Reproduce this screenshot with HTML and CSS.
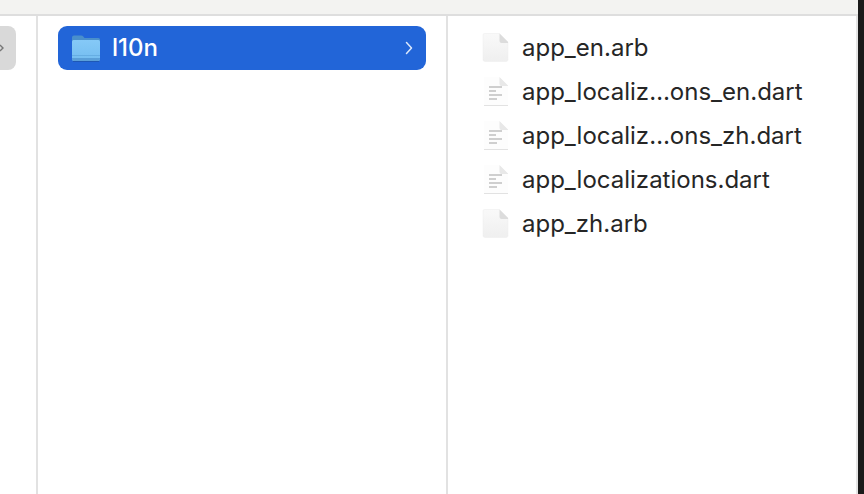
FILE: index.html
```html
<!DOCTYPE html>
<html lang="en">
<head>
<meta charset="utf-8">
<title>l10n</title>
<link rel="stylesheet" href="styles.css">
</head>
<body>
<div class="window">
  <div class="main">
    <div class="toolbar"></div>
    <div class="browser">
      <section class="col col-parent">
        <div class="parent-row">
          <svg class="parent-chev" width="4" height="8" viewBox="0 0 4 8"><path d="M0 1 L3 4 L0 7" fill="none" stroke="#777" stroke-width="1.4"/></svg>
        </div>
      </section>
      <section class="col col-folder">
        <div class="row-selected">
          <svg class="folder" width="30" height="29" viewBox="0 0 30 29">
            <defs>
              <linearGradient id="fg" x1="0" y1="0" x2="0" y2="1"><stop offset="0" stop-color="#85c9f7"/><stop offset="1" stop-color="#74bdf0"/></linearGradient>
              <linearGradient id="sg" x1="0" y1="0" x2="0" y2="1"><stop offset="0" stop-color="#f9f9f9"/><stop offset="1" stop-color="#efefef"/></linearGradient>
            </defs>
            <path d="M1 3.500 Q1 1.500 3 1.500 H10 Q11.500 1.500 12.500 2.800 L13.500 4 H27.500 Q29 4 29 5.500 V10 H1 Z" fill="#4a8fcb"/>
            <path d="M1 7.500 Q1 6 2.500 6 H27.500 Q29 6 29 7.500 V25 Q29 27 27 27 H3 Q1 27 1 25 Z" fill="url(#fg)"/>
            <rect x="1" y="21" width="28" height="1" fill="#66aee3"/>
            <path d="M1 24 V25 Q1 27 3 27 H27 Q29 27 29 25 V24 Z" fill="#5a9fd8"/>
            <path d="M2 27.500 H28" stroke="#1d4f9f" stroke-width="1" opacity="0.6"/>
          </svg>
          <span class="sel-name">l10n</span>
          <svg class="chev" width="8" height="14" viewBox="0 0 8 14"><path d="M1.500 1.500 L6.500 7 L1.500 12.500" fill="none" stroke="#dce8fb" stroke-width="1.500" stroke-linecap="round" stroke-linejoin="round"/></svg>
        </div>
      </section>
      <section class="col col-files">
        <ul class="files">
          <li class="file">
            <svg class="icon" width="28" height="30" viewBox="0 0 28 30"><path d="M1 2 Q1 0.500 2.500 0.500 H17.500 L26 9 V26.500 Q26 28.500 24 28.500 H3 Q1 28.500 1 26.500 Z" fill="url(#sg)" class="sheet"/><path d="M17.500 0.500 V8 Q17.500 10 19.500 10 H26 V9 Z" class="fold"/></svg>
            <span class="name">app_en.arb</span>
          </li>
          <li class="file">
            <svg class="icon" width="28" height="30" viewBox="0 0 28 30"><path d="M2 0 H17.500 L26 8.500 V28 H2 Z" class="page"/><path d="M2 28.500 H26" class="page-base"/><path d="M17.500 0 V7 Q17.500 9 19.500 9 H26 V8.500 Z" class="page-fold"/><g class="lines"><rect x="7" y="9" width="13" height="2"/><rect x="7" y="13" width="7" height="2"/><rect x="7" y="17" width="13" height="2"/><rect x="7" y="21" width="8" height="2"/></g></svg>
            <span class="name">app_localiz…ons_en.dart</span>
          </li>
          <li class="file">
            <svg class="icon" width="28" height="30" viewBox="0 0 28 30"><path d="M2 0 H17.500 L26 8.500 V28 H2 Z" class="page"/><path d="M2 28.500 H26" class="page-base"/><path d="M17.500 0 V7 Q17.500 9 19.500 9 H26 V8.500 Z" class="page-fold"/><g class="lines"><rect x="7" y="9" width="13" height="2"/><rect x="7" y="13" width="7" height="2"/><rect x="7" y="17" width="13" height="2"/><rect x="7" y="21" width="8" height="2"/></g></svg>
            <span class="name">app_localiz…ons_zh.dart</span>
          </li>
          <li class="file">
            <svg class="icon" width="28" height="30" viewBox="0 0 28 30"><path d="M2 0 H17.500 L26 8.500 V28 H2 Z" class="page"/><path d="M2 28.500 H26" class="page-base"/><path d="M17.500 0 V7 Q17.500 9 19.500 9 H26 V8.500 Z" class="page-fold"/><g class="lines"><rect x="7" y="9" width="13" height="2"/><rect x="7" y="13" width="7" height="2"/><rect x="7" y="17" width="13" height="2"/><rect x="7" y="21" width="8" height="2"/></g></svg>
            <span class="name">app_localizations.dart</span>
          </li>
          <li class="file">
            <svg class="icon" width="28" height="30" viewBox="0 0 28 30"><path d="M1 2 Q1 0.500 2.500 0.500 H17.500 L26 9 V26.500 Q26 28.500 24 28.500 H3 Q1 28.500 1 26.500 Z" fill="url(#sg)" class="sheet"/><path d="M17.500 0.500 V8 Q17.500 10 19.500 10 H26 V9 Z" class="fold"/></svg>
            <span class="name">app_zh.arb</span>
          </li>
        </ul>
      </section>
      <div class="edge"></div>
    </div>
  </div>
  <div class="strip"></div>
</div>
</body>
</html>
```

FILE: styles.css
```css
* { box-sizing: border-box; }
html, body { margin: 0; padding: 0; height: 100%; background: #fff; overflow: hidden; }
.window {
  width: 864px;
  height: 494px;
  display: flex;
  font-family: Inter, "Liberation Sans", sans-serif;
  color: #262626;
}
.main { flex: 1; display: flex; flex-direction: column; min-width: 0; }
.strip { width: 6px; flex: none; background: #1a1a1a; }
.toolbar {
  height: 16px;
  flex: none;
  background: #f3f3f1;
  border-bottom: 2px solid #dedede;
}
.browser { flex: 1; display: flex; min-height: 0; }
.col { padding-top: 10px; flex: none; }
.col-parent { width: 38px; border-right: 2px solid #e2e2e2; }
.parent-row {
  width: 16px;
  height: 44px;
  background: #d9d9d9;
  border-radius: 0 8px 8px 0;
  display: flex;
  align-items: center;
}
.parent-chev { display: block; }
.col-folder { width: 410px; border-right: 2px solid #e2e2e2; padding-left: 20px; }
.row-selected {
  width: 368px;
  height: 44px;
  background: #2265d8;
  border-radius: 9px;
  display: flex;
  align-items: center;
  padding: 0 13px;
  color: #fff;
  font-size: 24px;
  font-weight: 500;
}
.folder { margin-right: 11px; flex: none; }
.sel-name { flex: 1; margin-bottom: 2px; }
.col-files { flex: 1; }
.files { list-style: none; margin: 0; padding: 0 0 0 34px; }
.file {
  height: 44px;
  display: flex;
  align-items: center;
  gap: 12px;
  font-size: 24px;
  white-space: nowrap;
}
.name { margin-bottom: 2px; }
.icon { flex: none; }
.sheet { stroke: #ececec; stroke-width: 0.500; }
.fold { fill: #dcdcdc; }
.page { fill: #fdfdfd; }
.page-base { stroke: #e2e2e2; stroke-width: 1; fill: none; }
.page-fold { fill: #e8e8e8; }
.lines { fill: #cfcfcf; }
.edge { width: 2px; flex: none; background: #e4e4e4; margin-left: auto; }
```
